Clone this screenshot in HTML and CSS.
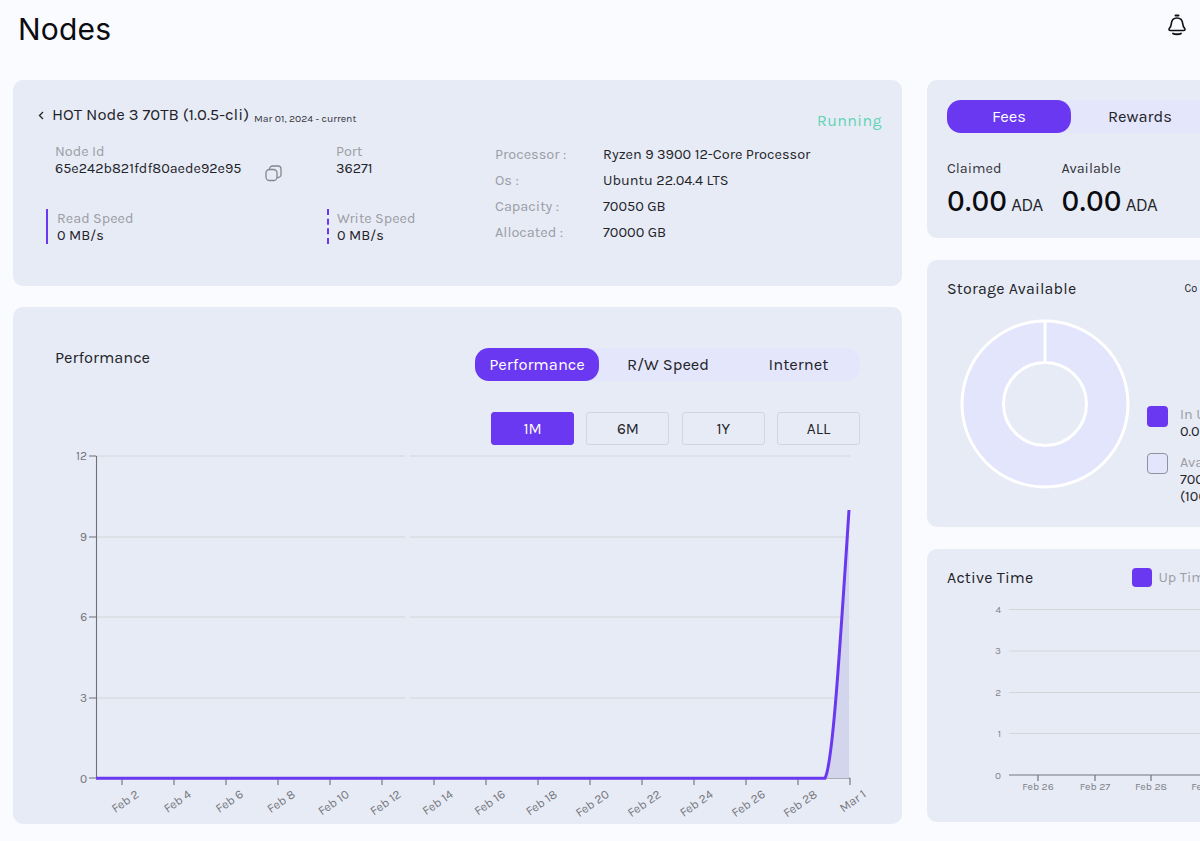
FILE: index.html
```html
<!DOCTYPE html>
<html lang="en">
<head>
<meta charset="utf-8">
<title>Nodes</title>
<link rel="stylesheet" href="styles.css">
</head>
<body>
<div class="page">
  <header class="topbar">
    <h1 class="title">Nodes</h1>
    <svg class="bell" width="20" height="24" viewBox="0 0 20 24" fill="none" stroke="#111" stroke-width="1.600" stroke-linecap="round" stroke-linejoin="round">
      <path d="M8.500 2.500h3" stroke-width="2"/>
      <path d="M10 5c3.300 0 5.400 2.600 5.700 5.700.2 2.200.9 3.600 2 4.900.7.900.2 1.900-1 1.900H3.300c-1.200 0-1.700-1-1-1.900 1.100-1.300 1.800-2.700 2-4.900C4.600 7.600 6.700 5 10 5z"/>
      <path d="M6 20.500c1.500 1 6.500 1 8 0" stroke-width="1.900"/>
    </svg>
  </header>
  <div class="layout">
    <div class="col-left">
      <section class="card node-card">
        <div class="node-head">
          <div class="node-title">
            <svg class="back" width="6" height="9" viewBox="0 0 6 9" fill="none" stroke="#222" stroke-width="1.300"><path d="M5 1 1.500 4.500 5 8"/></svg>
            <span class="node-name">HOT Node 3 70TB (1.0.5-cli)</span>
            <span class="node-date">Mar 01, 2024 - current</span>
          </div>
          <span class="status">Running</span>
        </div>
        <div class="node-body">
          <div class="node-stats">
            <div class="stat stat-id">
              <span class="label">Node Id</span>
              <span class="value">65e242b821fdf80aede92e95</span>
              <svg class="copy" width="17" height="17" viewBox="0 0 17 17" fill="none" stroke="#85878f" stroke-width="1.300"><rect x="1" y="4.500" width="11" height="11" rx="3.500"/><path d="M4.500 4.500V4a3 3 0 0 1 3-3H13a3 3 0 0 1 3 3v5.500a3 3 0 0 1-3 3h-1"/></svg>
            </div>
            <div class="stat stat-port">
              <span class="label">Port</span>
              <span class="value">36271</span>
            </div>
            <div class="stat speed speed-read">
              <span class="label">Read Speed</span>
              <span class="value">0 MB/s</span>
            </div>
            <div class="stat speed speed-write">
              <span class="label">Write Speed</span>
              <span class="value">0 MB/s</span>
            </div>
          </div>
          <dl class="specs">
            <dt>Processor :</dt><dd>Ryzen 9 3900 12-Core Processor</dd>
            <dt>Os :</dt><dd>Ubuntu 22.04.4 LTS</dd>
            <dt>Capacity :</dt><dd>70050 GB</dd>
            <dt>Allocated :</dt><dd>70000 GB</dd>
          </dl>
        </div>
      </section>
      <section class="card perf-card">
        <div class="perf-head">
          <span class="perf-title">Performance</span>
          <div class="tabs perf-tabs">
            <span class="tab active">Performance</span>
            <span class="tab">R/W Speed</span>
            <span class="tab">Internet</span>
          </div>
        </div>
        <div class="ranges">
          <span class="range active">1M</span>
          <span class="range">6M</span>
          <span class="range">1Y</span>
          <span class="range">ALL</span>
        </div>
        <svg class="perf-chart" width="889" height="389" viewBox="13 446 889 389">
          <g class="grid">
            <path d="M96 456H405M410 456H850M96 537H405M410 537H850M96 617H405M410 617H850M96 698H405M410 698H850"/>
          </g>
          <g class="axis">
            <path d="M96.500 456V778M89 456H96M89 537H96M89 617H96M89 698H96M89 778H96"/>
            <path d="M96 778H850"/>
            <path d="M122 778v7M174 778v7M226 778v7M278 778v7M330 778v7M382 778v7M434 778v7M486 778v7M538 778v7M590 778v7M642 778v7M694 778v7M746 778v7M798 778v7M850 778v7"/>
          </g>
          <g class="ylab">
            <text x="87" y="460">12</text><text x="87" y="541">9</text><text x="87" y="621">6</text><text x="87" y="702">3</text><text x="87" y="783">0</text>
          </g>
          <g class="xlab">
            <text transform="translate(140 796) rotate(-35)">Feb 2</text>
            <text transform="translate(192 796) rotate(-35)">Feb 4</text>
            <text transform="translate(244 796) rotate(-35)">Feb 6</text>
            <text transform="translate(296 796) rotate(-35)">Feb 8</text>
            <text transform="translate(350 796) rotate(-35)">Feb 10</text>
            <text transform="translate(402 796) rotate(-35)">Feb 12</text>
            <text transform="translate(454 796) rotate(-35)">Feb 14</text>
            <text transform="translate(506 796) rotate(-35)">Feb 16</text>
            <text transform="translate(558 796) rotate(-35)">Feb 18</text>
            <text transform="translate(610 796) rotate(-35)">Feb 20</text>
            <text transform="translate(662 796) rotate(-35)">Feb 22</text>
            <text transform="translate(714 796) rotate(-35)">Feb 24</text>
            <text transform="translate(766 796) rotate(-35)">Feb 26</text>
            <text transform="translate(818 796) rotate(-35)">Feb 28</text>
            <text transform="translate(867 796) rotate(-35)">Mar 1</text>
          </g>
          <path class="area" d="M825 778C832 765 838 680 849 510V778Z"/>
          <path class="line" d="M96 778.300H825C832 765 838 680 849 510"/>
        </svg>
      </section>
    </div>
    <div class="col-right">
      <section class="card fees-card">
        <div class="tabs fees-tabs">
          <span class="tab active">Fees</span>
          <span class="tab">Rewards</span>
        </div>
        <div class="fees-row">
          <div class="fee">
            <span class="fee-label">Claimed</span>
            <span class="fee-value"><span>0.00</span><small>ADA</small></span>
          </div>
          <div class="fee">
            <span class="fee-label">Available</span>
            <span class="fee-value"><span>0.00</span><small>ADA</small></span>
          </div>
        </div>
      </section>
      <section class="card storage-card">
        <div class="storage-head">
          <span class="card-title">Storage Available</span>
          <span class="storage-extra">Co</span>
        </div>
        <div class="storage-body">
          <svg class="donut" width="170" height="170" viewBox="0 0 170 170">
            <circle class="donut-ring" cx="85" cy="85" r="62.500" />
            <circle class="donut-edge" cx="85" cy="85" r="83"/>
            <circle class="donut-edge" cx="85" cy="85" r="41.500"/>
            <path class="donut-edge" d="M85 2V43.500"/>
          </svg>
          <ul class="legend">
            <li class="legend-item">
              <span class="swatch swatch-used"></span>
              <span class="legend-text"><span class="label">In Use</span><span class="value">0.00 GB</span></span>
            </li>
            <li class="legend-item">
              <span class="swatch swatch-free"></span>
              <span class="legend-text"><span class="label">Available</span><span class="value">70000 GB</span><span class="value">(100%)</span></span>
            </li>
          </ul>
        </div>
      </section>
      <section class="card active-card">
        <div class="active-head">
          <span class="card-title">Active Time</span>
          <span class="uptime"><span class="swatch swatch-used swatch-sm"></span><span class="label">Up Time</span></span>
        </div>
        <svg class="active-chart" width="300" height="210" viewBox="927 600 300 210">
          <path class="grid-thin" d="M1009 609.500H1227M1009 651H1227M1009 692.500H1227M1009 733.500H1227"/>
          <path class="axis-thin" d="M1009 775H1227M1038 775v6M1095 775v6M1151 775v6"/>
          <g class="ylab-sm">
            <text x="1001" y="613">4</text><text x="1001" y="654">3</text><text x="1001" y="696">2</text><text x="1001" y="737">1</text><text x="1001" y="779">0</text>
          </g>
          <g class="xlab-sm">
            <text x="1038" y="790">Feb 26</text><text x="1095" y="790">Feb 27</text><text x="1151" y="790">Feb 28</text><text x="1207" y="790">Feb 29</text>
          </g>
        </svg>
      </section>
    </div>
  </div>
</div>
</body>
</html>
```
FILE: styles.css
```css
* { box-sizing: border-box; }
html, body { margin: 0; padding: 0; height: 100%; }
body {
  width: 1200px;
  height: 841px;
  overflow: hidden;
  background: #fafbff;
  color: #23242a;
  font-family: "Karla", "Inter", "Liberation Sans", sans-serif;
  font-size: 14px;
}
.page { width: 1340px; padding: 0 0 0 13px; }
.topbar {
  display: flex;
  justify-content: space-between;
  align-items: flex-start;
  width: 1174px;
  height: 80px;
}
.title {
  margin: 10px 0 0 5px;
  font-family: "Inter", "Liberation Sans", sans-serif;
  font-size: 30px;
  line-height: 38px;
  font-weight: 400;
  letter-spacing: 0.200px;
  color: #0c0c10;
}
.bell { margin-top: 13px; }
.layout { display: flex; gap: 25px; align-items: flex-start; }
.col-left { width: 889px; display: flex; flex-direction: column; gap: 21px; }
.col-right { width: 400px; display: flex; flex-direction: column; gap: 22px; }
.card { background: #e7ebf5; border-radius: 10px; }

.node-card { height: 206px; padding: 26px 20px 0 25px; }
.node-head { display: flex; justify-content: space-between; align-items: flex-start; height: 37px; }
.node-title { display: flex; align-items: flex-end; }
.back { margin-right: 8px; align-self: center; }
.node-name { font-size: 16.600px; line-height: 18px; color: #23242a; }
.node-date { margin-left: 5px; font-size: 10.400px; line-height: 10px; color: #33343a; }
.status { margin-top: 5px; font-size: 16px; letter-spacing: 0.400px; color: #5fd3b4; }
.node-body { display: flex; }
.node-stats {
  width: 457px;
  display: grid;
  grid-template-columns: 281px 1fr;
  grid-template-rows: 49px 40px;
  row-gap: 15px;
}
.stat { position: relative; display: flex; flex-direction: column; padding-left: 17px; }
.stat .label, .legend-text .label, .specs dt, .uptime .label { color: #9b9da5; }
.label { font-size: 14.400px; line-height: 17px; }
.value { font-size: 14.400px; line-height: 17px; color: #23242a; }
.copy { position: absolute; left: 227px; top: 22px; }
.speed { padding-left: 9px; margin-left: 8px; height: 35px; justify-content: center; margin-top: 2px; }
.speed-read { border-left: 2px solid #6a38f0; }
.speed-write { border-left: 2px dashed #6a38f0; padding-left: 8px; }
.specs {
  margin: -1px 0 0;
  display: grid;
  grid-template-columns: 108px 1fr;
  grid-auto-rows: 26px;
  font-size: 14.500px;
  line-height: 26px;
}
.specs dd { margin: 0; color: #23242a; }

.perf-card { height: 517px; position: relative; padding: 41px 42px 0 42px; }
.perf-head { display: flex; justify-content: space-between; align-items: flex-start; }
.perf-title { font-size: 16.400px; line-height: 20px; color: #23242a; }
.tabs { display: flex; background: #e4e6fb; border-radius: 14px; }
.tab { display: flex; align-items: center; justify-content: center; font-size: 16.500px; color: #23242a; }
.tab.active { background: #6a38f0; color: #fff; border-radius: 14px; }
.perf-tabs { height: 33px; width: 385px; }
.perf-tabs .tab { width: 124px; }
.perf-tabs .tab:nth-child(2) { width: 138px; }
.perf-tabs .tab:nth-child(3) { width: 123px; }
.ranges { display: flex; justify-content: flex-end; gap: 12.300px; margin-top: 31px; }
.range {
  width: 83px;
  height: 33px;
  display: flex;
  align-items: center;
  justify-content: center;
  font-size: 15.500px;
  color: #23242a;
  border: 1px solid #d3d5de;
  border-radius: 3px;
}
.range.active { background: #6a38f0; border-color: #6a38f0; color: #fff; }
.perf-chart { position: absolute; left: 0; top: 139px; }
.grid path { stroke: #d4d5d9; stroke-width: 1.200; fill: none; }
.axis path { stroke: #6f7077; stroke-width: 1.100; fill: none; }
.ylab text { font-size: 12px; fill: #707178; text-anchor: end; }
.xlab text { font-size: 12.500px; fill: #76777e; text-anchor: end; }
.area { fill: #d3d5ec; }
.line { fill: none; stroke: #6a38f0; stroke-width: 3; }

.fees-card { height: 158px; padding: 20px 20px 0; }
.fees-tabs { height: 33px; width: 400px; }
.fees-tabs .tab { width: 124px; }
.fees-tabs .tab:nth-child(2) { width: 138px; }
.fees-row { display: flex; margin-top: 27px; }
.fee { width: 114.500px; display: flex; flex-direction: column; }
.fee-label { font-size: 14.400px; line-height: 17px; color: #33343a; }
.fee-value { font-family: "Inter", "Liberation Sans", sans-serif; font-size: 27.500px; font-weight: 500; line-height: 33px; margin-top: 8px; color: #0c0c10; white-space: nowrap; }
.fee-value small { font-size: 15.500px; font-weight: 400; color: #23242a; margin-left: 4px; }

.storage-card { height: 267px; padding: 19px 20px 0; }
.storage-head { display: flex; align-items: center; }
.card-title { font-size: 16px; line-height: 19px; letter-spacing: 0.200px; color: #23242a; }
.storage-extra { margin-left: 108px; font-size: 11px; color: #23242a; }
.storage-body { position: relative; display: flex; margin-top: 21px; }
.donut { margin-left: 13px; flex: none; }
.donut-ring { fill: none; stroke: #e2e5fb; stroke-width: 41.500; }
.donut-edge { fill: none; stroke: #fff; stroke-width: 3; }
.legend { list-style: none; margin: 0; padding: 0; position: absolute; left: 200px; top: 87px; }
.legend-item { display: flex; gap: 12px; margin-bottom: 14px; }
.legend-text { display: flex; flex-direction: column; }
.swatch { display: block; flex: none; width: 21px; height: 21px; border-radius: 4px; margin-top: 0; }
.swatch-used { background: #6a38f0; }
.swatch-free { background: #e2e5fb; border: 1px solid #8f919c; margin-top: -1px; }
.swatch-sm { width: 20px; height: 19px; margin-top: 0; }

.active-card { height: 273px; padding: 19px 20px 0; position: relative; }
.active-head { display: flex; align-items: center; }
.uptime { display: flex; align-items: center; gap: 6px; margin-left: 99px; }
.active-chart { position: absolute; left: 0; top: 51px; }
.grid-thin { stroke: #d4d5d9; stroke-width: 1.200; fill: none; }
.axis-thin { stroke: #75767d; stroke-width: 1.200; fill: none; }
.ylab-sm text { font-size: 10px; fill: #808189; text-anchor: end; }
.xlab-sm text { font-size: 10.500px; fill: #808189; text-anchor: middle; }
```
